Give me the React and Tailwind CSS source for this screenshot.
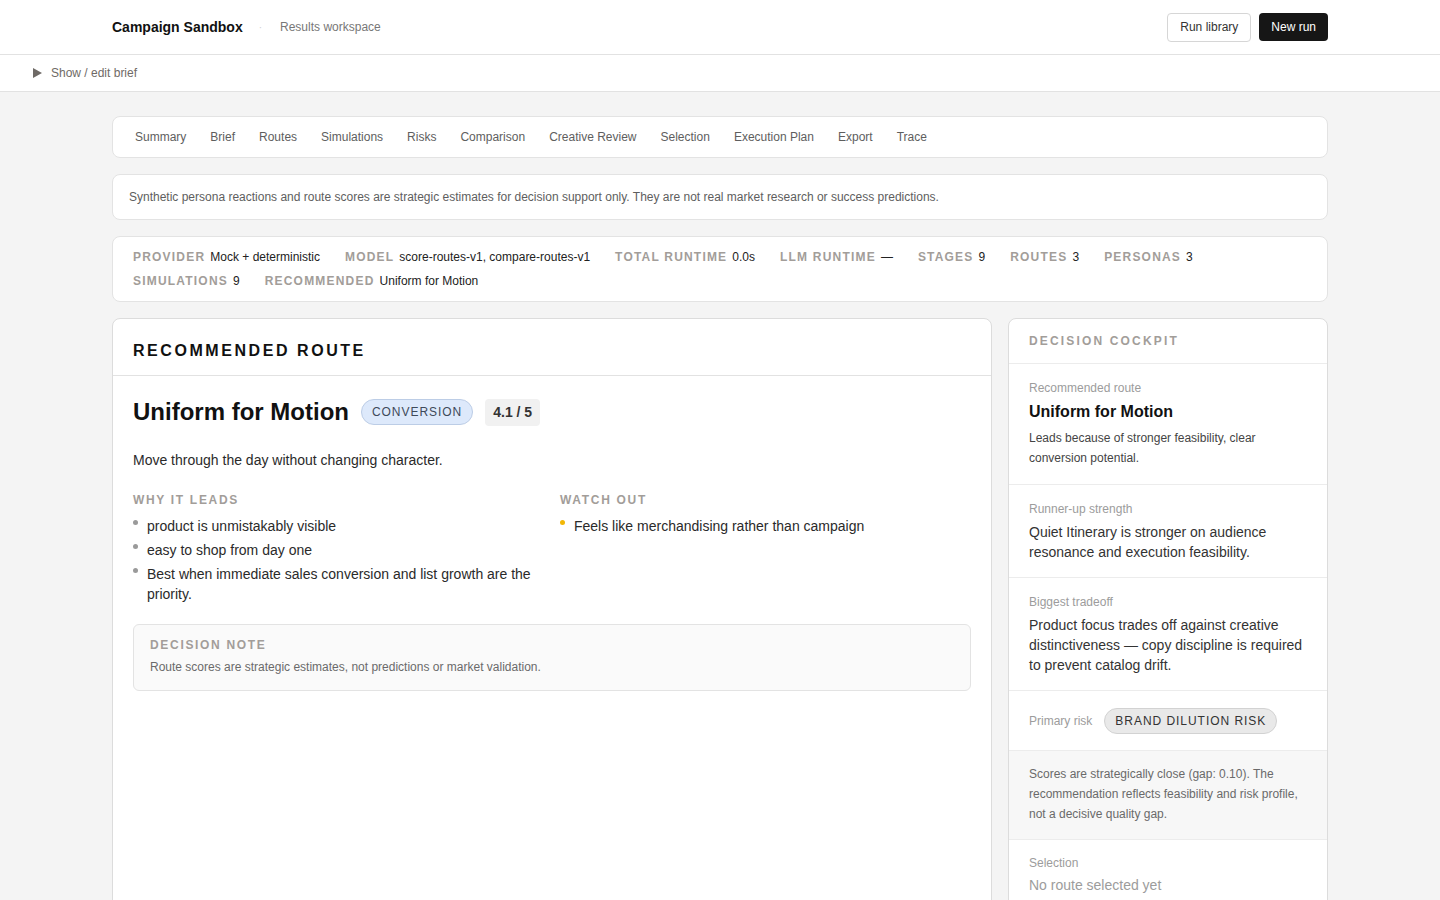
const tabs = [
  'Summary',
  'Brief',
  'Routes',
  'Simulations',
  'Risks',
  'Comparison',
  'Creative Review',
  'Selection',
  'Execution Plan',
  'Export',
  'Trace',
];

const meta = [
  ['Provider', 'Mock + deterministic'],
  ['Model', 'score-routes-v1, compare-routes-v1'],
  ['Total runtime', '0.0s'],
  ['LLM runtime', '—'],
  ['Stages', '9'],
  ['Routes', '3'],
  ['Personas', '3'],
  ['Simulations', '9'],
  ['Recommended', 'Uniform for Motion'],
];

const whyLeads = [
  'product is unmistakably visible',
  'easy to shop from day one',
  'Best when immediate sales conversion and list growth are the priority.',
];

function Bullet({ children, tone = 'gray' }) {
  return (
    <li className="flex gap-[9px] text-[14px] leading-5 text-[#2a2a2a]">
      <span
        className={
          tone === 'amber'
            ? 'mt-[4px] h-[5px] w-[5px] shrink-0 rounded-full bg-[#f2b705]'
            : 'mt-[4px] h-[5px] w-[5px] shrink-0 rounded-full bg-[#9a9a9a]'
        }
      />
      <span>{children}</span>
    </li>
  );
}

function CockpitSection({ label, children, className = 'pb-[15px]' }) {
  return (
    <div className={`border-b border-[#ececec] px-5 pt-[14px] ${className}`}>
      <div className="text-[12px] leading-5 text-[#9c9c9c]">{label}</div>
      {children}
    </div>
  );
}

export default function App() {
  return (
    <div
      className="min-h-screen bg-[#f4f4f4] text-[#1a1a1a]"
      style={{ fontFamily: '"Liberation Sans", Arial, sans-serif' }}
    >
      {/* top bar */}
      <header className="flex h-[55px] items-center justify-between border-b border-[#e2e2e2] bg-white px-[112px]">
        <div className="flex items-center">
          <span className="text-[14px] font-bold text-[#111]">Campaign Sandbox</span>
          <span className="ml-4 mr-[18px] text-[10px] text-[#cfcfcf]">·</span>
          <span className="text-[12px] text-[#777]">Results workspace</span>
        </div>
        <div className="flex items-center gap-2">
          <button className="h-[29px] rounded-[4px] border border-[#d6d6d6] bg-white px-3 text-[12px] text-[#333]">
            Run library
          </button>
          <button className="h-[28px] rounded-[4px] bg-[#161616] px-3 text-[12px] text-white">
            New run
          </button>
        </div>
      </header>

      <div className="flex h-[37px] items-center gap-[9px] border-b border-[#e2e2e2] bg-white pl-[33px]">
        <svg width="9" height="10" viewBox="0 0 9 10">
          <path d="M0 0 L9 5 L0 10 Z" fill="#6f6a66" />
        </svg>
        <span className="text-[12px] text-[#6f6a66]">Show / edit brief</span>
      </div>

      <main className="mx-auto flex w-[1216px] flex-col gap-4 pt-6">
        <nav className="flex h-[42px] items-center gap-6 rounded-lg border border-[#e3e3e3] bg-white px-[22px]">
          {tabs.map((t) => (
            <span key={t} className="text-[12px] text-[#5e5e5e]">
              {t}
            </span>
          ))}
        </nav>

        <div className="flex h-[46px] items-center rounded-lg border border-[#e3e3e3] bg-white px-4 text-[12px] text-[#5e5e5e]">
          Synthetic persona reactions and route scores are strategic estimates for decision support only. They are not real market research or success predictions.
        </div>

        <div className="flex flex-wrap gap-x-[25px] rounded-lg border border-[#e3e3e3] bg-white px-5 py-2">
          {meta.map(([k, v]) => (
            <div key={k} className="flex items-center gap-[5px] leading-6">
              <span className="text-[12px] font-bold uppercase tracking-[0.1em] text-[#a29d99]">{k}</span>
              <span className="text-[12px] text-[#222]">{v}</span>
            </div>
          ))}
        </div>

        <div className="flex items-stretch gap-4">
          {/* recommended route */}
          <section className="flex-1 rounded-lg border border-[#dcdcdc] bg-white">
            <div className="flex h-[57px] items-center border-b border-[#e2e2e2] px-5 pt-[7px]">
              <h2 className="text-[16px] font-bold uppercase tracking-[0.16em] text-[#111]">Recommended route</h2>
            </div>
            <div className="px-5 pt-5">
              <div className="flex items-center">
                <h3 className="text-[24px] font-bold leading-8 text-[#111]">Uniform for Motion</h3>
                <span className="ml-3 flex h-[26px] items-center rounded-full border border-[#bccde6] bg-[#dde9fb] px-[10px] text-[12px] uppercase tracking-[0.08em] text-[#3e4a5a]">
                  Conversion
                </span>
                <span className="ml-3 flex h-[27px] items-center rounded-[4px] bg-[#f1f1f1] px-2 text-[14px] font-bold text-[#333]">
                  4.1 / 5
                </span>
              </div>
              <p className="mt-[22px] text-[14px] leading-5 text-[#2a2a2a]">Move through the day without changing character.</p>

              <div className="mt-[21px] grid grid-cols-2 gap-4">
                <div>
                  <div className="text-[12px] font-bold uppercase tracking-[0.14em] text-[#a29d99]">Why it leads</div>
                  <ul className="mt-[7px] flex flex-col gap-1">
                    {whyLeads.map((w) => (
                      <Bullet key={w}>{w}</Bullet>
                    ))}
                  </ul>
                </div>
                <div>
                  <div className="text-[12px] font-bold uppercase tracking-[0.14em] text-[#a29d99]">Watch out</div>
                  <ul className="mt-[7px] flex flex-col gap-1">
                    <Bullet tone="amber">Feels like merchandising rather than campaign</Bullet>
                  </ul>
                </div>
              </div>

              <div className="mt-5 rounded-md border border-[#e3e3e3] bg-[#fafafa] px-4 pt-[10px] pb-[13px]">
                <div className="text-[12px] font-bold uppercase tracking-[0.14em] leading-5 text-[#a29d99]">Decision note</div>
                <div className="mt-[2px] text-[12px] leading-5 text-[#6a6a6a]">
                  Route scores are strategic estimates, not predictions or market validation.
                </div>
              </div>
            </div>
          </section>

          {/* decision cockpit */}
          <aside className="w-[320px] shrink-0 rounded-lg border border-[#dcdcdc] bg-white">
            <div className="flex h-[45px] items-center border-b border-[#ececec] px-5">
              <h2 className="text-[12px] font-bold uppercase tracking-[0.18em] text-[#a29d99]">Decision cockpit</h2>
            </div>
            <CockpitSection label="Recommended route" className="pb-[16px]">
              <div className="mt-[2px] text-[16px] font-bold leading-6 text-[#111]">Uniform for Motion</div>
              <p className="mt-1 text-[12px] leading-5 text-[#444]">
                Leads because of stronger feasibility, clear conversion potential.
              </p>
            </CockpitSection>
            <CockpitSection label="Runner-up strength">
              <p className="mt-[3px] text-[14px] leading-5 text-[#333]">
                Quiet Itinerary is stronger on audience resonance and execution feasibility.
              </p>
            </CockpitSection>
            <CockpitSection label="Biggest tradeoff">
              <p className="mt-[3px] text-[14px] leading-5 text-[#333]">
                Product focus trades off against creative distinctiveness — copy discipline is required to prevent catalog drift.
              </p>
            </CockpitSection>
            <div className="flex h-[60px] items-center gap-3 border-b border-[#ececec] px-5 pt-[1px]">
              <span className="text-[12px] text-[#9c9c9c]">Primary risk</span>
              <span className="flex h-[26px] items-center rounded-full border border-[#d2d2d2] bg-[#e9e9e9] px-[10px] text-[12px] uppercase tracking-[0.08em] text-[#333]">
                Brand dilution risk
              </span>
            </div>
            <div className="border-b border-[#ececec] bg-[#f7f7f7] px-5 pt-[13px] pb-[15px] text-[12px] leading-5 text-[#6a6a6a]">
              Scores are strategically close (gap: 0.10). The recommendation reflects feasibility and risk profile, not a decisive quality gap.
            </div>
            <div className="px-5 pt-[13px] pb-[13px]">
              <div className="text-[12px] leading-5 text-[#9c9c9c]">Selection</div>
              <div className="mt-[2px] text-[14px] leading-5 text-[#9c9c9c]">No route selected yet</div>
            </div>
          </aside>
        </div>
      </main>
    </div>
  );
}
